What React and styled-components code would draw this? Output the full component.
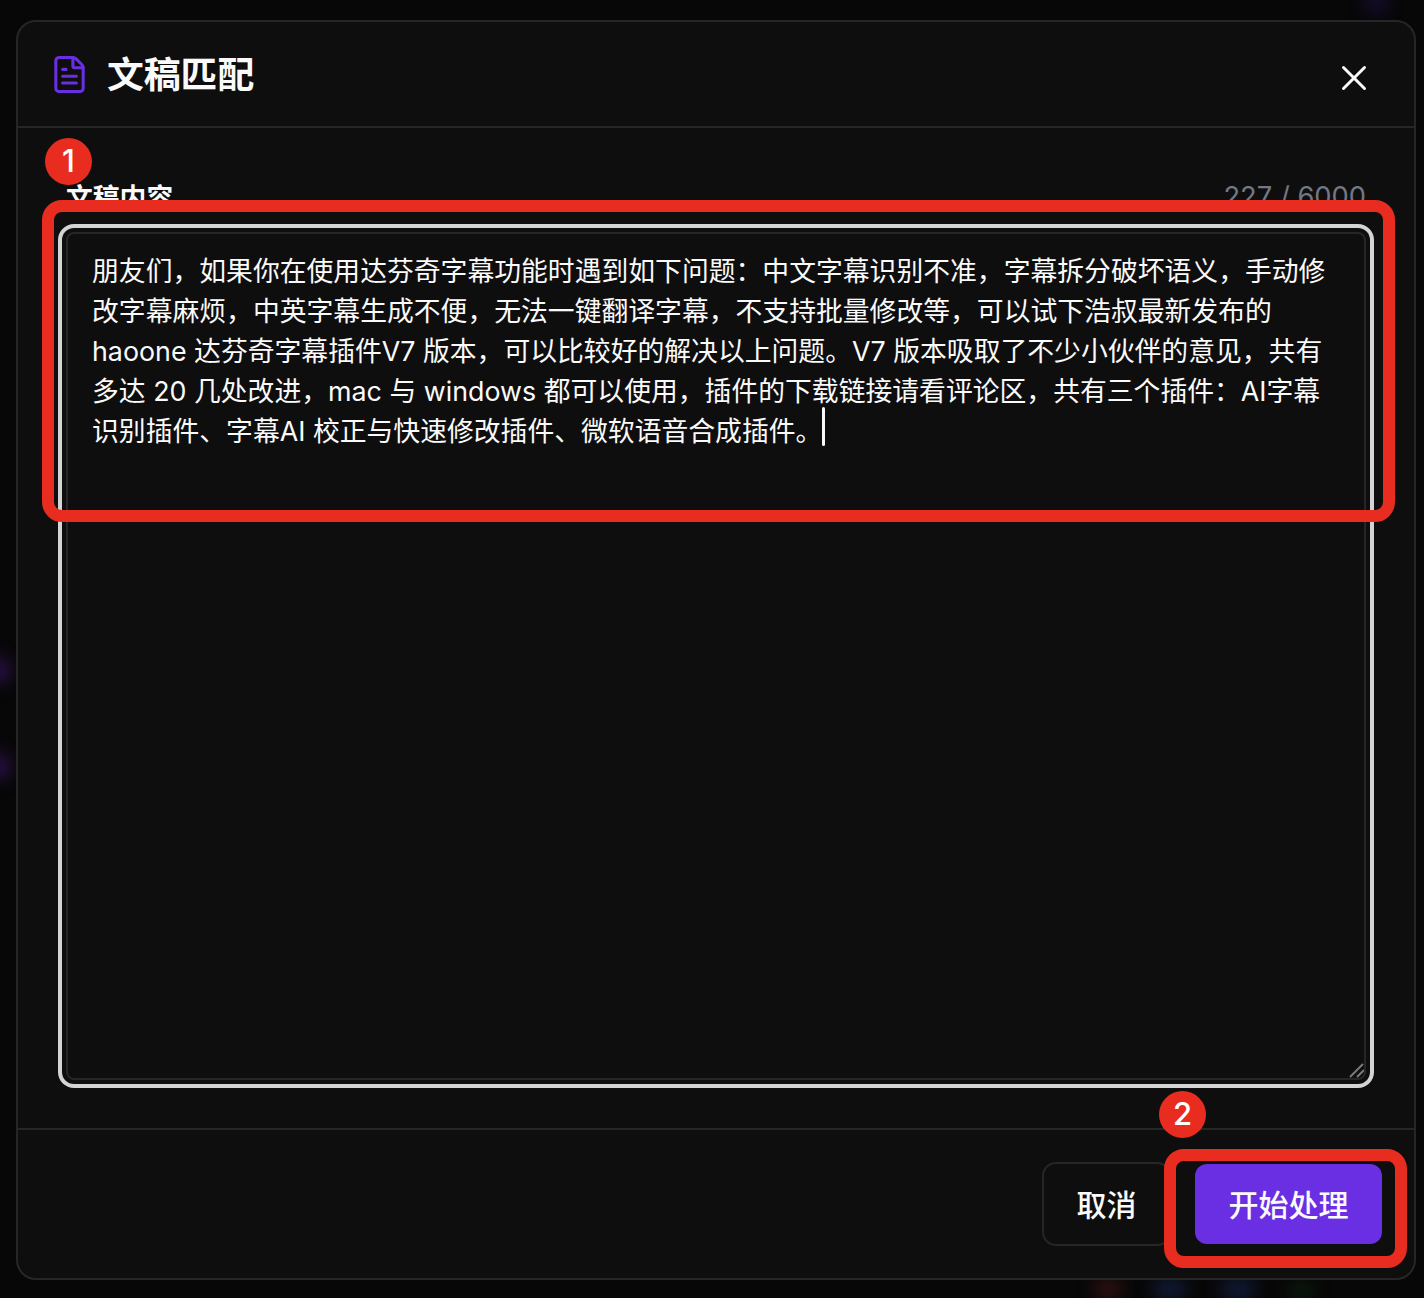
import React from 'react';
import styled, { createGlobalStyle } from 'styled-components';
import { FileText, X } from 'lucide-react';

const GlobalStyle = createGlobalStyle`
  html, body {
    margin: 0;
    padding: 0;
    background: #070707;
  }
  * {
    box-sizing: border-box;
  }
`;

const FONT = `Inter, "Noto Sans CJK SC", sans-serif`;

const Page = styled.div`
  position: relative;
  width: 1424px;
  height: 1298px;
  padding: 20px 8px 18px 16px;
  overflow: hidden;
  background: #070707;
  font-family: ${FONT};
`;

const Glow = styled.div`
  position: absolute;
  left: ${p => p.$x}px;
  top: ${p => p.$y}px;
  width: ${p => p.$w}px;
  height: ${p => p.$h}px;
  border-radius: 50%;
  background: ${p => p.$color};
  filter: blur(8px);
`;

const Dialog = styled.div`
  position: relative;
  display: flex;
  flex-direction: column;
  width: 1400px;
  height: 1260px;
  background: #0e0e0f;
  border: 2px solid #262627;
  border-radius: 20px;
`;

const Header = styled.header`
  display: flex;
  align-items: center;
  justify-content: space-between;
  height: 106px;
  padding: 0 39px 0 31px;
  border-bottom: 2px solid #262627;
`;

const TitleGroup = styled.div`
  display: flex;
  align-items: center;
  gap: 17px;
  color: #6a2fe3;
`;

const Title = styled.h2`
  margin: 2px 0 0;
  font-size: 36.8px;
  font-weight: 700;
  line-height: 44px;
  color: #fafafa;
`;

const CloseButton = styled.button`
  display: flex;
  padding: 0;
  margin-top: 8px;
  border: 0;
  background: none;
  color: #fafafa;
`;

const Body = styled.div`
  display: flex;
  flex: 1;
  flex-direction: column;
  padding: 48px 48px 48px;
`;

const LabelRow = styled.div`
  display: flex;
  align-items: center;
  justify-content: space-between;
  height: 40px;
  margin-bottom: 16px;
`;

const Label = styled.span`
  font-size: 26.8px;
  font-weight: 600;
  color: #fafafa;
`;

const Counter = styled.span`
  font-size: 27.3px;
  color: #727884;
`;

const TextBox = styled.div`
  position: relative;
  flex: 1;
  padding: 17px 24px 0;
  background: #0e0e0f;
  border: 2px solid #262627;
  border-radius: 8px;
  box-shadow: 0 0 0 4px #0e0e0f, 0 0 0 8px #d4d4d4;
  color: #fafafa;
  font-size: 26.82px;
  line-height: 40px;
`;

const TextLine = styled.div`
  height: 40px;
  white-space: nowrap;
`;

const Caret = styled.span`
  display: inline-block;
  width: 3px;
  height: 39px;
  margin: -4px 0;
  vertical-align: -1px;
  border-radius: 2px;
  background: #fafafa;
`;

const ResizeGrip = styled.svg`
  position: absolute;
  right: 0;
  bottom: 0;
`;

const Footer = styled.footer`
  display: flex;
  align-items: center;
  justify-content: flex-end;
  gap: 24px;
  height: 150px;
  padding: 0 32px 0 0;
  border-top: 2px solid #262627;
`;

const Button = styled.button`
  padding: 0 0 2px;
  font-family: ${FONT};
  font-size: 30px;
  font-weight: 500;
  color: #fafafa;
`;

const CancelButton = styled(Button)`
  width: 129px;
  height: 84px;
  background: transparent;
  border: 2px solid #262627;
  border-radius: 14px;
`;

const PrimaryButton = styled(Button)`
  width: 187px;
  height: 80px;
  background: #6a2fe3;
  border: 0;
  border-radius: 12px;
`;

const Highlight = styled.div`
  position: absolute;
  left: ${p => p.$x}px;
  top: ${p => p.$y}px;
  width: ${p => p.$w}px;
  height: ${p => p.$h}px;
  border: 12px solid #e82c1f;
  border-radius: 20px;
`;

const StepBadge = styled.div`
  position: absolute;
  left: ${p => p.$x}px;
  top: ${p => p.$y}px;
  display: flex;
  align-items: center;
  justify-content: center;
  width: 47px;
  height: 47px;
  padding-bottom: 2px;
  border-radius: 50%;
  background: #e82c1f;
  color: #ffffff;
  font-size: 31px;
  font-weight: 500;
`;

const lines = [
  '朋友们，如果你在使用达芬奇字幕功能时遇到如下问题：中文字幕识别不准，字幕拆分破坏语义，手动修',
  '改字幕麻烦，中英字幕生成不便，无法一键翻译字幕，不支持批量修改等，可以试下浩叔最新发布的',
  'haoone 达芬奇字幕插件V7 版本，可以比较好的解决以上问题。V7 版本吸取了不少小伙伴的意见，共有',
  '多达 20 几处改进，mac 与 windows 都可以使用，插件的下载链接请看评论区，共有三个插件：AI字幕',
  '识别插件、字幕AI 校正与快速修改插件、微软语音合成插件。',
];

const glows = [
  { x: -10, y: 656, w: 20, h: 28, color: '#2a1148' },
  { x: -10, y: 752, w: 20, h: 28, color: '#2a1148' },
  { x: 1364, y: -14, w: 24, h: 30, color: '#150d2c' },
  { x: 1092, y: 1278, w: 32, h: 22, color: '#2e1010' },
  { x: 1152, y: 1278, w: 36, h: 22, color: '#101a36' },
  { x: 1220, y: 1278, w: 36, h: 22, color: '#101a36' },
  { x: 1288, y: 1282, w: 26, h: 18, color: '#0c1c0e' },
];

export default function App() {
  return (
    <Page>
      <GlobalStyle />
      {glows.map((g, i) => (
        <Glow key={i} $x={g.x} $y={g.y} $w={g.w} $h={g.h} $color={g.color} />
      ))}
      <Dialog>
        <Header>
          <TitleGroup>
            <FileText size={41} strokeWidth={1.8} />
            <Title>文稿匹配</Title>
          </TitleGroup>
          <CloseButton>
            <X size={42} strokeWidth={1.7} />
          </CloseButton>
        </Header>
        <Body>
          <LabelRow>
            <Label>文稿内容</Label>
            <Counter>227 / 6000</Counter>
          </LabelRow>
          <TextBox>
            {lines.map((line, i) => (
              <TextLine key={i}>
                {line}
                {i === lines.length - 1 && <Caret />}
              </TextLine>
            ))}
            <ResizeGrip width="22" height="22" viewBox="0 0 22 22">
              <path d="M8 21 L21 8 M15 21 L22 14" stroke="#7a7a7a" strokeWidth="2" fill="none" />
            </ResizeGrip>
          </TextBox>
        </Body>
        <Footer>
          <CancelButton>取消</CancelButton>
          <PrimaryButton>开始处理</PrimaryButton>
        </Footer>
      </Dialog>
      <Highlight $x={42} $y={200} $w={1353} $h={322} />
      <Highlight $x={1164} $y={1149} $w={243} $h={119} />
      <StepBadge $x={45} $y={138}>1</StepBadge>
      <StepBadge $x={1159} $y={1091}>2</StepBadge>
    </Page>
  );
}
